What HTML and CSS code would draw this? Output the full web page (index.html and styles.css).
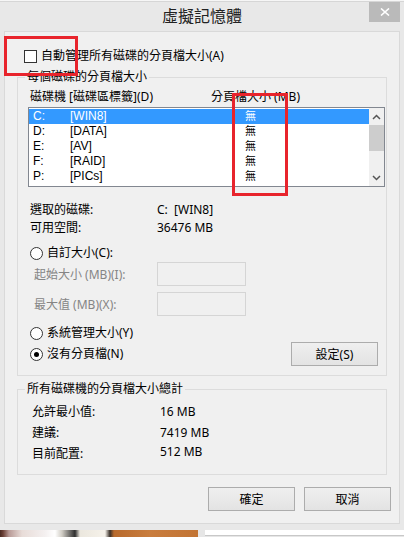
FILE: index.html
```html
<!DOCTYPE html>
<html lang="zh-Hant">
  <head>
    <meta charset="UTF-8" />
    <meta name="viewport" content="width=device-width, initial-scale=1.0" />
    <title>虛擬記憶體</title>
    <link rel="stylesheet" href="styles.css">
  </head>
  <body>
    <div class="window">
      <div class="titlebar">
        <span></span>
        <h1 class="title">虛擬記憶體</h1>
        <button class="close">
          <svg width="10" height="8" viewBox="0 0 10 8">
            <path d="M1 0.5 L9 7.5 M9 0.5 L1 7.5" stroke="#fff" stroke-width="1.6" fill="none" />
          </svg>
        </button>
      </div>

      <div class="panel">
        <div class="check-row"><span class="checkbox"></span>自動管理所有磁碟的分頁檔大小(A)</div>

        <fieldset class="group">
          <legend>每個磁碟的分頁檔大小</legend>
          <div class="list-head">
            <span>磁碟機 [磁碟區標籤](D)</span>
            <span>分頁檔大小 (MB)</span>
          </div>
          <div class="listbox">
            <div class="rows">
              <div class="row selected"><span>C:</span><span>[WIN8]</span><span class="none">無</span></div>
              <div class="row"><span>D:</span><span>[DATA]</span><span class="none">無</span></div>
              <div class="row"><span>E:</span><span>[AV]</span><span class="none">無</span></div>
              <div class="row"><span>F:</span><span>[RAID]</span><span class="none">無</span></div>
              <div class="row"><span>P:</span><span>[PICs]</span><span class="none">無</span></div>
            </div>
            <div class="scrollbar">
              <div class="arrow">
                <svg width="9" height="6" viewBox="0 0 9 6"><polyline points="1,5 4.5,1.5 8,5" stroke="#555" stroke-width="1.5" fill="none" /></svg>
              </div>
              <div class="thumb"></div>
              <div class="track"></div>
              <div class="arrow">
                <svg width="9" height="6" viewBox="0 0 9 6"><polyline points="1,1 4.5,4.5 8,1" stroke="#555" stroke-width="1.5" fill="none" /></svg>
              </div>
            </div>
          </div>

          <div class="info">
            <span>選取的磁碟:</span><span>C:&nbsp; [WIN8]</span>
            <span>可用空間:</span><span>36476 MB</span>
          </div>

          <div class="radio-row custom"><span class="radio"></span>自訂大小(C):</div>
          <div class="field-row"><span>起始大小 (MB)(I):</span><span class="textbox"></span></div>
          <div class="field-row second"><span>最大值 (MB)(X):</span><span class="textbox"></span></div>
          <div class="radio-row system"><span class="radio"></span>系統管理大小(Y)</div>
          <div class="set-row">
            <div class="radio-row"><span class="radio checked"></span>沒有分頁檔(N)</div>
            <button class="btn">設定(S)</button>
          </div>
        </fieldset>

        <fieldset class="group totals">
          <legend>所有磁碟機的分頁檔大小總計</legend>
          <div class="totals-grid">
            <span>允許最小值:</span><span>16 MB</span>
            <span>建議:</span><span>7419 MB</span>
            <span>目前配置:</span><span class="lift">512 MB</span>
          </div>
        </fieldset>

        <div class="actions">
          <button class="btn">確定</button>
          <button class="btn">取消</button>
        </div>
      </div>
    </div>

    <div class="strip">
      <div class="photo"></div>
      <div class="blank"></div>
    </div>

    <!-- red marks drawn over the screenshot -->
    <div class="mark mark-check"></div>
    <div class="mark mark-size"></div>
  </body>
</html>
```

FILE: styles.css
```css
body {
  margin: 0;
  background-color: #f6f6f6;
  font-family: "Noto Sans", "Noto Sans CJK TC", sans-serif;
  font-size: 12px;
  color: #000;
}
button {
  font: inherit;
  color: inherit;
}

.window {
  margin-top: 1px;
  border-top: 1px solid #d6d6d6;
  background-color: #e8e8e8;
  padding: 0 4px 6px 4px;
}

/*titlebar*/
.titlebar {
  display: grid;
  grid-template-columns: 1fr auto 1fr;
  height: 29px;
}
.title {
  margin: 0;
  font-size: 16px;
  font-weight: normal;
  line-height: 29px;
  color: #222;
}
.close {
  justify-self: end;
  align-self: start;
  width: 31px;
  height: 20px;
  border: none;
  padding: 0;
  background-color: #bababa;
  display: flex;
  align-items: center;
  justify-content: center;
}

/*panel*/
.panel {
  background-color: #f0f0f0;
  border: 1px solid #d9d9d9;
  padding-bottom: 12px;
}
.check-row {
  display: flex;
  align-items: center;
  gap: 4px;
  height: 16px;
  margin-top: 16px;
  padding-left: 19px;
  line-height: 16px;
}
.checkbox {
  width: 13px;
  height: 13px;
  box-sizing: border-box;
  border: 1px solid #333;
  background-color: #fff;
}

.group {
  margin: 5px 12px 0 12px;
  padding: 0 0 9px 0;
  border: 1px solid #dcdcdc;
  min-width: 0;
}
.group legend {
  margin-left: 7px;
  padding: 0 2px;
  line-height: 16px;
}

.list-head {
  display: grid;
  grid-template-columns: 181px auto;
  margin-top: 4px;
  padding-left: 12px;
  line-height: 16px;
}

.listbox {
  display: flex;
  box-sizing: border-box;
  height: 80px;
  width: 357px;
  margin: 2px 0 0 10px;
  border: 1px solid #828790;
  background-color: #fff;
}
.rows {
  flex: 1;
  padding-top: 1px;
}
.row {
  display: grid;
  grid-template-columns: 37px 175px auto;
  height: 15px;
  line-height: 15px;
  padding-left: 4px;
  font-family: "Liberation Sans", "Noto Sans CJK TC", sans-serif;
}
.row .none {
  font-size: 11px;
}
.row.selected {
  background-color: #3399ff;
  color: #fff;
}
.scrollbar {
  width: 15px;
  display: flex;
  flex-direction: column;
  background-color: #f0f0f0;
}
.arrow {
  height: 17px;
  display: flex;
  align-items: center;
  justify-content: center;
}
.thumb {
  height: 26px;
  background-color: #cdcdcd;
}
.track {
  flex: 1;
}

.info {
  display: grid;
  grid-template-columns: 127px auto;
  margin-top: 14px;
  padding-left: 12px;
  line-height: 18px;
}

.radio-row {
  display: flex;
  align-items: center;
  gap: 4px;
  height: 16px;
  line-height: 16px;
}
.radio-row.custom {
  margin-top: 8px;
  padding-left: 12px;
}
.radio-row.system {
  margin-top: 9px;
  padding-left: 12px;
}
.radio {
  width: 13px;
  height: 13px;
  box-sizing: border-box;
  border: 1px solid #333;
  border-radius: 50%;
  background-color: #fff;
  display: flex;
  align-items: center;
  justify-content: center;
}
.radio.checked::after {
  content: "";
  width: 5px;
  height: 5px;
  border-radius: 50%;
  background-color: #000;
}

.field-row {
  display: grid;
  grid-template-columns: 123px 89px;
  align-items: center;
  margin-top: 1px;
  padding-left: 16px;
  color: #858585;
}
.field-row.second {
  margin-top: 6px;
}
.textbox {
  height: 24px;
  box-sizing: border-box;
  border: 1px solid #d5d5d5;
  background-color: #f0f0f0;
}

.set-row {
  display: flex;
  align-items: center;
  justify-content: space-between;
  height: 24px;
  margin-top: 1px;
  padding: 0 8px 0 12px;
}

.btn {
  width: 87px;
  height: 24px;
  padding: 0;
  border: 1px solid #acacac;
  background: linear-gradient(#efefef, #e3e3e3);
}

.totals {
  padding-bottom: 10px;
}
.totals-grid {
  display: grid;
  grid-template-columns: 128px auto;
  padding: 4px 0 0 14px;
  line-height: 21px;
}
.lift {
  position: relative;
  top: -2px;
}

.actions {
  display: flex;
  justify-content: flex-end;
  gap: 9px;
  margin-top: 12px;
  padding-right: 8px;
}

/*bottom of the screen behind the dialog*/
.strip {
  display: flex;
  height: 7px;
  background-color: #e6e6e6;
}
.photo {
  width: 198px;
  background: linear-gradient(90deg, #4a2a22 0, #6b4036 3px, #b89a96 9px, #e8dcd8 22px, #f4f0f0 45px, #fff 55px, #d0ccc4 62px, #2e2e2e 75px, #ebe7de 80px, #f6f2ea 105px, #3a3028 110px, #b86a2c 114px, #c97d3e 150px, #c27434 198px);
}
.blank {
  flex: 1;
  height: 5px;
  margin-left: 7px;
  background-color: #fff;
  border-bottom: 1px solid #c8c8c8;
}

/*annotations*/
.mark {
  position: absolute;
  box-sizing: border-box;
  border: 3px solid #e8242c;
}
.mark-check {
  left: 4px;
  top: 36px;
  width: 74px;
  height: 40px;
}
.mark-size {
  left: 232px;
  top: 93px;
  width: 56px;
  height: 103px;
}
```
